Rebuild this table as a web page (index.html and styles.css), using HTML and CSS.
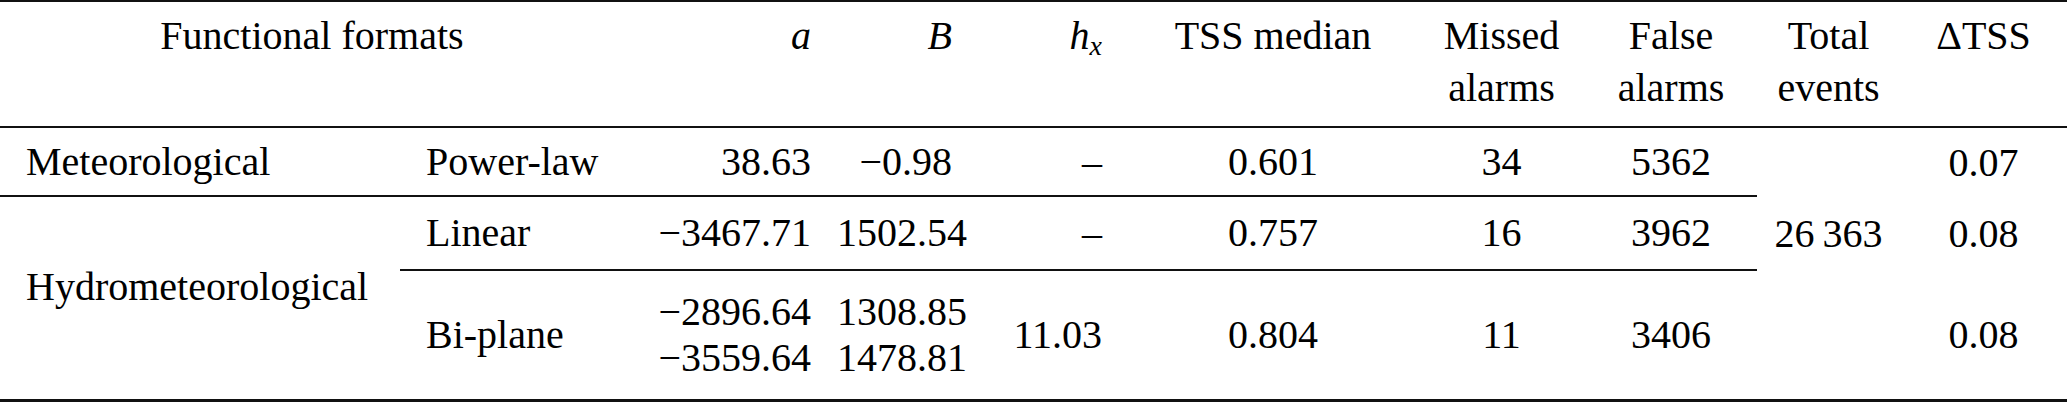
FILE: index.html
```html
<!DOCTYPE html>
<html lang="en">
<head>
<meta charset="utf-8">
<title>Functional formats</title>
<link rel="stylesheet" href="styles.css">
</head>
<body>
<table class="results">
  <colgroup>
    <col class="c-cat">
    <col class="c-fmt">
    <col class="c-a">
    <col class="c-b">
    <col class="c-h">
    <col class="c-tss">
    <col class="c-miss">
    <col class="c-false">
    <col class="c-total">
    <col class="c-delta">
  </colgroup>
  <thead>
    <tr class="head-row">
      <th colspan="2" class="span-head">Functional formats</th>
      <th class="num"><i>a</i></th>
      <th class="num"><i>B</i></th>
      <th class="num"><i>h</i><sub class="sub"><i>x</i></sub></th>
      <th>TSS median</th>
      <th>Missed<br>alarms</th>
      <th>False<br>alarms</th>
      <th>Total<br>events</th>
      <th>ΔTSS</th>
    </tr>
  </thead>
  <tbody>
    <tr class="row-met">
      <td class="txt rule">Meteorological</td>
      <td class="txt rule">Power-law</td>
      <td class="num rule">38.63</td>
      <td class="num rule">−0.98</td>
      <td class="num rule">–</td>
      <td class="rule">0.601</td>
      <td class="rule">34</td>
      <td class="rule">5362</td>
      <td></td>
      <td>0.07</td>
    </tr>
    <tr class="row-lin">
      <td class="txt hydro last" rowspan="2">Hydrometeorological</td>
      <td class="txt rule">Linear</td>
      <td class="num rule">−3467.71</td>
      <td class="num rule">1502.54</td>
      <td class="num rule">–</td>
      <td class="rule">0.757</td>
      <td class="rule">16</td>
      <td class="rule">3962</td>
      <td>26&#8201;363</td>
      <td>0.08</td>
    </tr>
    <tr class="row-bi">
      <td class="txt last">Bi-plane</td>
      <td class="num last two">−2896.64<br>−3559.64</td>
      <td class="num last two">1308.85<br>1478.81</td>
      <td class="num last">11.03</td>
      <td class="last">0.804</td>
      <td class="last">11</td>
      <td class="last">3406</td>
      <td class="last"></td>
      <td class="last">0.08</td>
    </tr>
  </tbody>
</table>
</body>
</html>
```
FILE: styles.css
```css
body {
  margin: 0;
  font-family: "Liberation Serif", serif;
  font-size: 40px;
  color: #000;
}

.results {
  width: 2067px;
  table-layout: fixed;
  border-collapse: separate;
  border-spacing: 0;
  font-size: 40px;
}

.c-cat { width: 400px; }
.c-fmt { width: 200px; }
.c-a { width: 237px; }
.c-b { width: 141px; }
.c-h { width: 150px; }
.c-tss { width: 290px; }
.c-miss { width: 167px; }
.c-false { width: 172px; }
.c-total { width: 143px; }
.c-delta { width: 167px; }

.results th,
.results td {
  padding: 0;
  text-align: center;
  font-weight: 400;
}

.head-row { height: 128px; }
.row-met { height: 69px; }
.row-lin { height: 74px; }
.row-bi { height: 131px; }

.results th {
  vertical-align: top;
  line-height: 52px;
  padding-top: 8px;
  border-top: 2px solid #111;
  border-bottom: 2px solid #111;
}

.results td {
  vertical-align: middle;
  line-height: 46px;
}

.results .span-head {
  padding-left: 50px;
  padding-right: 26px;
}

.results .num {
  text-align: right;
  padding-right: 26px;
}

.results .txt {
  text-align: left;
  padding-left: 26px;
}

.results .hydro {
  padding-bottom: 22px;
}

.results .rule {
  border-bottom: 2px solid #111;
}

.results .last {
  border-bottom: 3px solid #111;
}

.sub {
  font-size: 28px;
  line-height: 0;
  vertical-align: -6px;
}
```
